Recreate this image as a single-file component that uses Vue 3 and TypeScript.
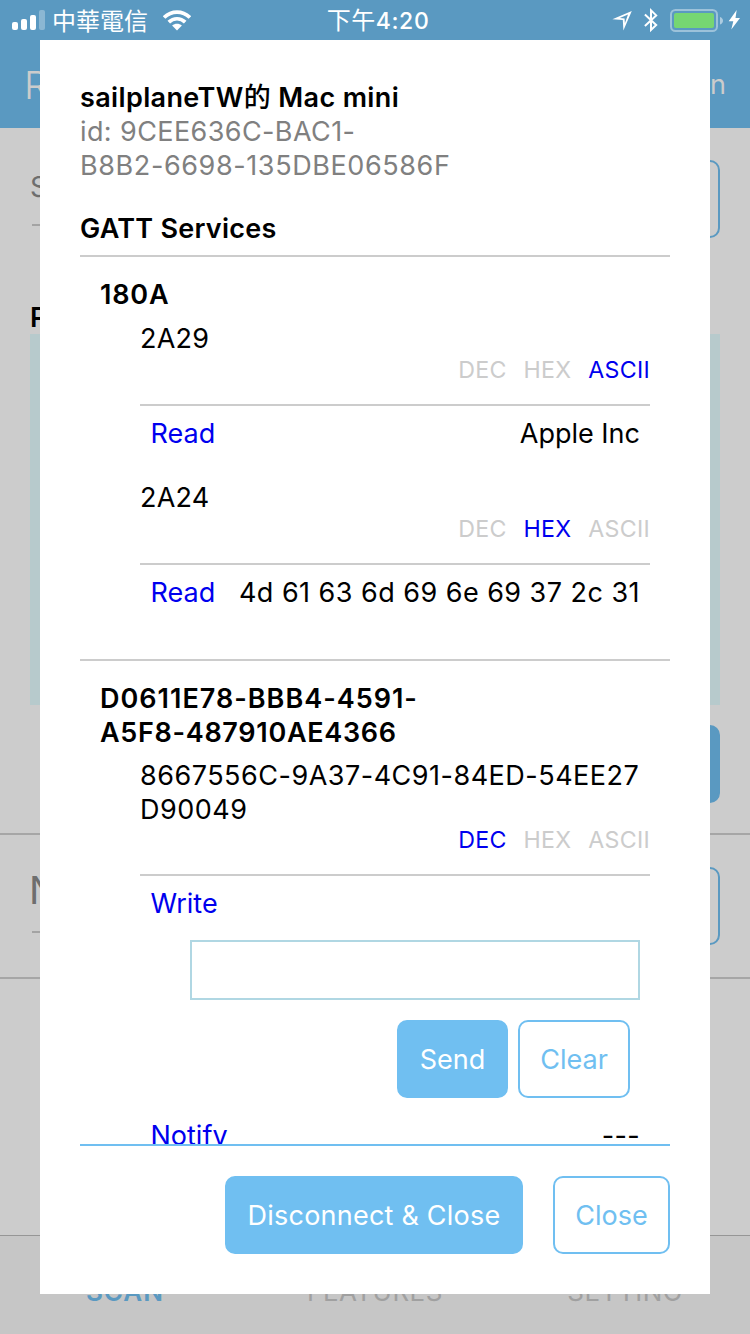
<script setup lang="ts">
type Mode = 'DEC' | 'HEX' | 'ASCII'

interface Characteristic {
  id: string
  lines: string[]
  mode: Mode
  value?: string
  writable?: boolean
}

interface Service {
  id: string
  lines: string[]
  characteristics: Characteristic[]
}

const modes: Mode[] = ['DEC', 'HEX', 'ASCII']

const services: Service[] = [
  {
    id: 'info',
    lines: ['180A'],
    characteristics: [
      { id: 'maker', lines: ['2A29'], mode: 'ASCII', value: 'Apple Inc' },
      { id: 'model', lines: ['2A24'], mode: 'HEX', value: '4d 61 63 6d 69 6e 69 37 2c 31' },
    ],
  },
  {
    id: 'continuity',
    lines: ['D0611E78-BBB4-4591-', 'A5F8-487910AE4366'],
    characteristics: [
      { id: 'data', lines: ['8667556C-9A37-4C91-84ED-54EE27', 'D90049'], mode: 'DEC', writable: true },
    ],
  },
]
</script>

<template>
  <div class="screen">
    <div class="page">
      <header class="nav"><span class="nav-title">R</span><span class="nav-action">n</span></header>
      <section class="search">
        <div class="field small">S</div>
        <div class="ghost-btn"></div>
      </section>
      <h2 class="found">P</h2>
      <div class="list"></div>
      <div class="row-end"><div class="ghost-btn solid"></div></div>
      <section class="name-row">
        <div class="field">N</div>
        <div class="ghost-btn"></div>
      </section>
      <nav class="tabs">
        <span class="tab current">SCAN</span><span class="tab">FEATURES</span><span class="tab last">SETTING</span>
      </nav>
    </div>

    <div class="status">
      <div class="status-left">
        <svg class="signal" width="34" height="22" viewBox="0 0 34 22">
          <rect x="0" y="12" width="6" height="8" rx="2" fill="#fff" />
          <rect x="9" y="9" width="6" height="11" rx="2" fill="#fff" />
          <rect x="18" y="5" width="6" height="15" rx="2" fill="#fff" />
          <rect x="27" y="0" width="6" height="20" rx="2" fill="#fff" opacity=".3" />
        </svg>
        <span class="carrier">中華電信</span>
        <svg class="wifi" width="28" height="21" viewBox="0 0 28 21">
          <g fill="none" stroke="#fff" stroke-width="3.7">
            <path d="M1.1 7.5C8.5.2 19.5.2 26.9 7.5" />
            <path d="M5.8 12.1C10.5 7.6 17.5 7.6 22.2 12.1" />
          </g>
          <path d="M9.1 15.6C12 13 16 13 18.9 15.6L14 20.5Z" fill="#fff" />
        </svg>
      </div>
      <span class="clock"><span class="clock-zh">下午</span>4:20</span>
      <div class="status-right">
        <svg width="140" height="30" viewBox="0 0 140 30">
          <path fill="#fff" fill-rule="evenodd" d="M21.800 6 2.400 14.200 12.800 15.100 13.400 25.500ZM18 9.500 14.900 18.200 14.600 13.400 9.800 13Z" />
          <path d="M34.900 9.500 46.200 20 41 25V5.400L46.200 10.400 34.900 21" fill="none" stroke="#fff" stroke-width="2" />
          <rect x="61" y="5" width="46" height="21" rx="4.5" fill="none" stroke="#fff" stroke-opacity=".4" stroke-width="2" />
          <rect x="64" y="8" width="40" height="15" rx="2" fill="#76d672" />
          <path d="M110 12c1.8.6 3 2.200 3 3.800s-1.200 3.200-3 3.800Z" fill="#fff" opacity=".5" />
          <path d="M126.700 5 118.700 16.300H123.300L121.300 24.500 130 13H125.500Z" fill="#fff" />
        </svg>
      </div>
    </div>

    <main class="modal">
      <h1 class="device">sailplaneTW<span class="zh">的</span> Mac mini</h1>
      <p class="uuid"><span class="uuid-head">id: 9CEE636C-BAC1-</span><br />B8B2-6698-135DBE06586F</p>
      <h2 class="heading">GATT Services</h2>
      <div class="scroll">
        <section v-for="s in services" :key="s.id" class="service">
          <h3 class="service-id" :class="{ long: s.lines.length > 1 }">
            <span v-for="l in s.lines" :key="l" class="line">{{ l }}</span>
          </h3>
          <article v-for="c in s.characteristics" :key="c.id" class="char">
            <div class="char-id" :class="{ long: c.lines.length > 1 }"><span v-for="l in c.lines" :key="l" class="line">{{ l }}</span></div>
            <div class="modes" :class="{ tight: c.lines.length > 1 }">
              <span v-for="m in modes" :key="m" :class="{ on: m === c.mode }">{{ m }}</span>
            </div>
            <template v-if="c.writable">
              <div class="op"><a>Write</a></div>
              <input class="entry" type="text" />
              <div class="entry-actions">
                <button class="btn solid send">Send</button>
                <button class="btn clear">Clear</button>
              </div>
              <div class="op notify"><a>Notify</a><span class="dashes">---</span></div>
            </template>
            <div v-else class="op"><a>Read</a><span :class="c.id">{{ c.value }}</span></div>
          </article>
        </section>
      </div>
      <footer class="actions">
        <button class="btn solid disconnect">Disconnect &amp; Close</button>
        <button class="btn close">Close</button>
      </footer>
    </main>
  </div>
</template>

<style>
html, body { margin: 0; background: #ccc; }
</style>

<style scoped>
* { box-sizing: border-box; }
h1, h2, h3, p { margin: 0; font-size: inherit; font-weight: 600; }
.screen {
  position: relative; width: 750px; height: 1334px; overflow: hidden; background: #ccc;
  font-family: Inter, "Noto Sans CJK TC", sans-serif; font-size: 27px; line-height: 34px; color: #000;
}
.page { height: 1334px; display: flex; flex-direction: column; }
.nav { height: 128px; padding: 40px 24px 0 24px; display: flex; align-items: center; justify-content: space-between; background: #5a99c1; color: #ccc; }
.nav-title { font-size: 38.5px; font-weight: 300; line-height: 50px; padding-top: 1px; }
.nav-action { padding-top: 2px; }
.search { height: 172px; padding: 32px 30px 0; display: flex; justify-content: space-between; align-items: flex-start; }
.field { width: 400px; height: 66px; margin-left: 2px; border-bottom: 2px solid #a3a3a3; color: #6e6e6e; font-size: 38.5px; line-height: 46px; text-indent: -3px; }
.field.small { font-size: 28px; line-height: 55px; text-indent: -2px; }
.ghost-btn { width: 110px; height: 78px; border: 2px solid #5a99c1; border-radius: 10px; }
.ghost-btn.solid { background: #5a99c1; }
.found { padding: 1px 0 0 30px; height: 34px; }
.list { margin: 0 30px; height: 371px; background: #b7cacc; }
.row-end { height: 128px; padding: 20px 30px 0; display: flex; justify-content: flex-end; }
.name-row { height: 146px; border-top: 2px solid #a6a6a6; border-bottom: 2px solid #a6a6a6; padding: 32px 30px 0; display: flex; justify-content: space-between; }
.tabs { margin-top: auto; height: 99px; border-top: 1px solid #969696; background: #c6c6c6; display: grid; grid-template-columns: repeat(3, 1fr); text-align: center; color: #a0a0a0; font-size: 26px; letter-spacing: .5px; padding-top: 39px; }
.tab.current { color: #5a99c1; font-weight: 600; letter-spacing: 1px; }

.status { position: absolute; inset: 0 0 auto; height: 40px; display: grid; grid-template-columns: 1fr auto 1fr; align-items: center; color: #fff; }
.status-left { display: flex; align-items: center; padding-left: 12px; }
.signal { margin-top: 2px; }
.carrier { margin-left: 6px; font-size: 24px; font-weight: 400; line-height: 34px; font-family: "Noto Sans CJK TC", sans-serif; }
.wifi { margin-left: 15px; }
.clock { padding-left: 6px; font-size: 23px; font-weight: 500; line-height: 34px; letter-spacing: .6px; }
.clock-zh { font-family: "Noto Sans CJK TC", sans-serif; font-weight: 400; font-size: 24px; }
.status-right { display: flex; justify-content: flex-end; }

.modal { position: absolute; left: 40px; top: 40px; width: 670px; height: 1254px; padding: 41px 40px 40px; background: #fff; display: flex; flex-direction: column; }
.device { letter-spacing: .37px; white-space: nowrap; }
.device .zh { font-weight: 500; }
.uuid { font-weight: 400; color: #808080; letter-spacing: .6px; }
.uuid-head { letter-spacing: .4px; }
.heading { margin-top: 29px; height: 45px; border-bottom: 2px solid #ccc; flex-shrink: 0; letter-spacing: .25px; }
.scroll { height: 889px; overflow: hidden; border-bottom: 2px solid #70bff1; flex-shrink: 0; }
.service { padding: 21px 20px 29px; border-bottom: 2px solid #ccc; }
.service-id { margin-bottom: 10px; letter-spacing: .8px; }
.service-id.long { margin-bottom: 9px; }
.service-id.long .line:first-child { letter-spacing: 1px; }
.service-id.long .line:last-child { letter-spacing: .68px; }
.line { display: block; white-space: nowrap; }
.char { padding: 0 0 30px 40px; }
.char + .char { padding-bottom: 20px; }
.char-id { letter-spacing: .2px; }
.char-id.long { letter-spacing: .5px; }
.modes { height: 50px; display: flex; justify-content: flex-end; gap: 16.8px; border-bottom: 2px solid #ccc; font-size: 23.2px; letter-spacing: .3px; line-height: 29px; color: #ccc; }
.modes.tight { height: 49px; line-height: 27px; }
.modes .on, a { color: #0000ee; }
.op { display: flex; justify-content: space-between; padding: 11px 10px 0; white-space: nowrap; }
.op a { padding-left: .5px; }
.model { letter-spacing: .46px; }
.entry { display: block; width: 450px; height: 60px; margin: 19px 0 0 50px; padding: 8px; border: 2px solid #b0d7e3; background: #fff; font: inherit; }
.entry-actions { display: flex; justify-content: flex-end; gap: 10px; padding: 20px 20px 0 0; }
.btn { height: 78px; padding: 1px 0 0; border: 2px solid #70bff1; border-radius: 10px; background: #fff; color: #70bff1; font: inherit; }
.btn.solid { background: #70bff1; color: #fff; }
.send { width: 111px; }
.clear { width: 112px; }
.notify { padding-top: 21px; }
.dashes { letter-spacing: .3px; }
.actions { display: flex; justify-content: flex-end; gap: 30px; padding-top: 30px; }
.disconnect { width: 298px; letter-spacing: .22px; }
.close { width: 117px; }
</style>
